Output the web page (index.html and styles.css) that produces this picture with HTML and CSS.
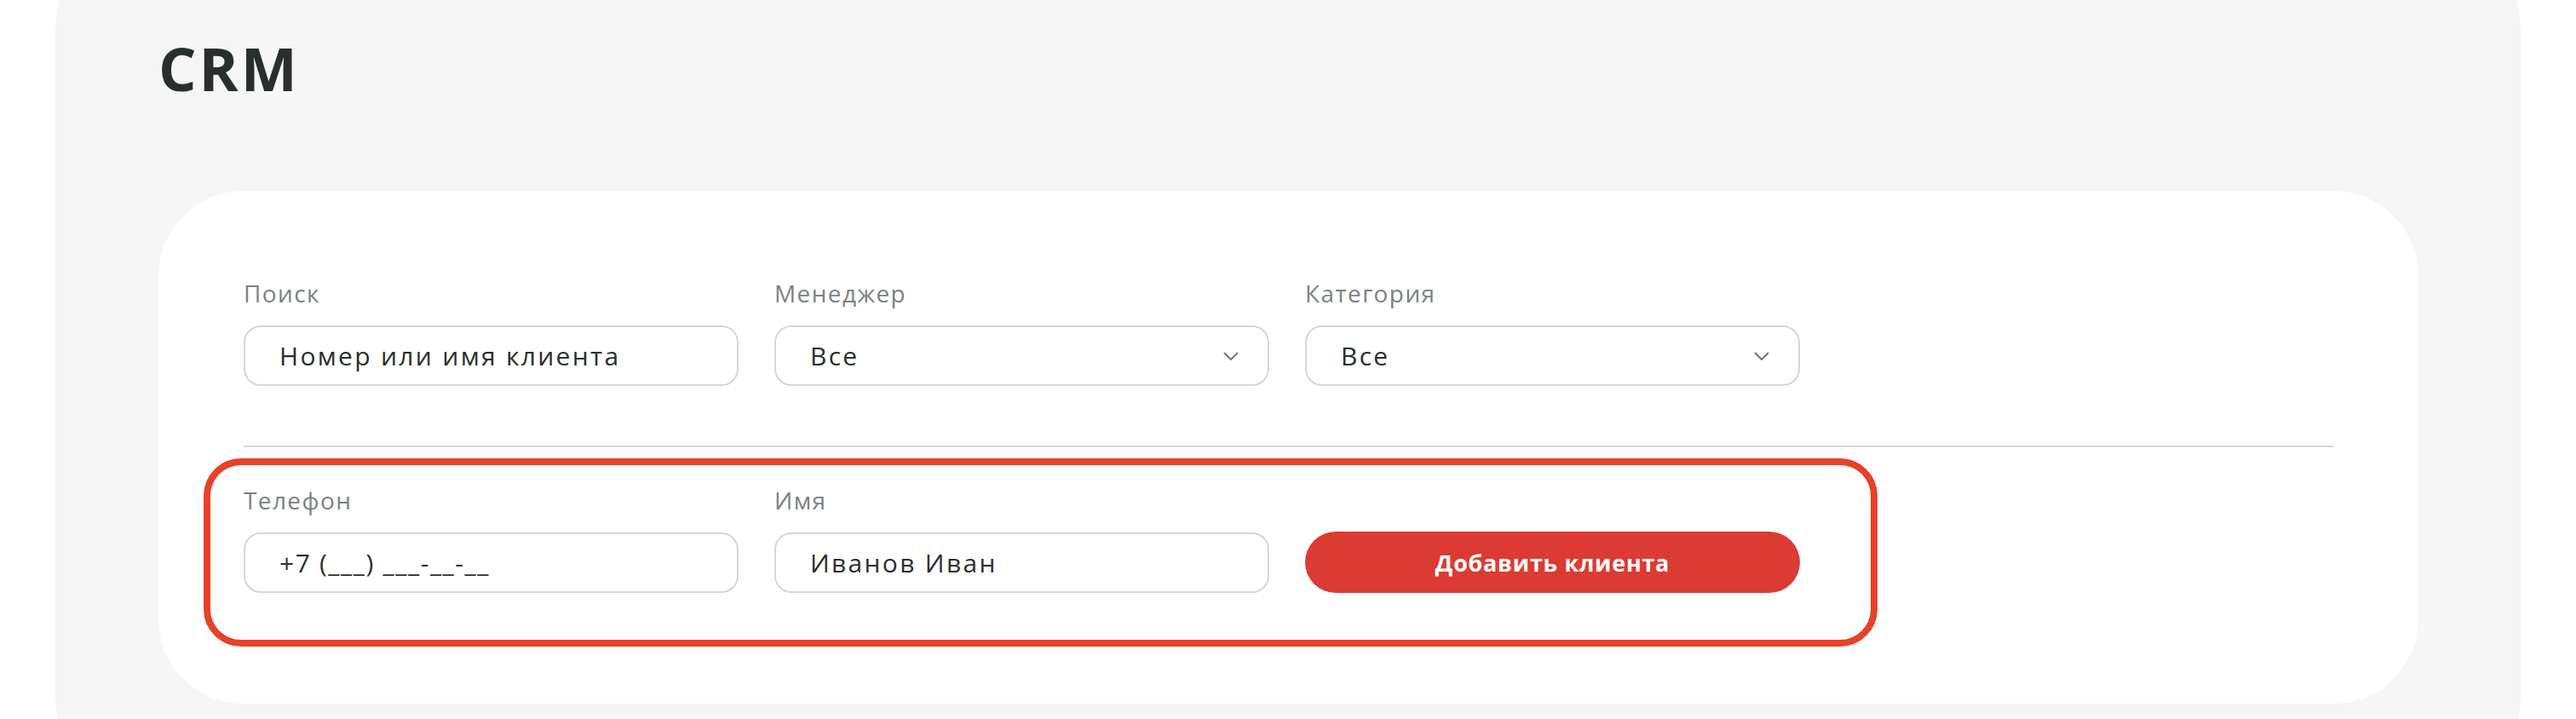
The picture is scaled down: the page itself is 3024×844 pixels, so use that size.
FILE: index.html
```html
<!DOCTYPE html>
<html lang="ru">
<head>
<meta charset="utf-8">
<title>CRM</title>
<link rel="stylesheet" href="styles.css">
</head>
<body>
<main class="panel">
  <h1 class="title">CRM</h1>
  <section class="card">
    <div class="row">
      <div class="group">
        <label class="label">Поиск</label>
        <div class="field"><span class="value">Номер или имя клиента</span></div>
      </div>
      <div class="group">
        <label class="label">Менеджер</label>
        <div class="field select"><span class="value">Все</span>
          <svg class="chevron" viewBox="0 0 18 10" width="18" height="10"><polyline points="1,1 9,9 17,1"/></svg>
        </div>
      </div>
      <div class="group">
        <label class="label">Категория</label>
        <div class="field select"><span class="value">Все</span>
          <svg class="chevron" viewBox="0 0 18 10" width="18" height="10"><polyline points="1,1 9,9 17,1"/></svg>
        </div>
      </div>
    </div>
    <div class="divider"></div>
    <div class="row row-add">
      <div class="group">
        <label class="label">Телефон</label>
        <div class="field"><span class="value value-phone">+7 (___) ___-__-__</span></div>
      </div>
      <div class="group">
        <label class="label">Имя</label>
        <div class="field"><span class="value">Иванов Иван</span></div>
      </div>
      <div class="group group-btn">
        <button class="btn" type="button">Добавить клиента</button>
      </div>
      <div class="highlight"></div>
    </div>
  </section>
</main>
</body>
</html>
```
FILE: styles.css
```css
html, body {
  margin: 0;
  padding: 0;
  background: #ffffff;
}
body {
  font-family: "Open Sans", "Noto Sans", "DejaVu Sans", sans-serif;
  overflow: hidden;
}
.panel {
  margin: -90px 0 0 65px;
  width: 2894px;
  box-sizing: border-box;
  padding: 128px 120px 120px 121px;
  background: #f6f6f6;
  border-radius: 125px;
}
.title {
  margin: 0 0 102px 0;
  font-size: 70px;
  line-height: 84px;
  font-weight: 700;
  color: #292e2e;
  letter-spacing: 3px;
}
.card {
  background: #ffffff;
  border-radius: 100px;
  padding: 103px 100px 100px 100px;
}
.row {
  display: grid;
  grid-template-columns: repeat(3, 581px);
  column-gap: 42px;
  align-items: end;
}
.group {
  display: flex;
  flex-direction: column;
  gap: 21px;
}
.label {
  font-size: 28px;
  line-height: 34px;
  color: #7a8381;
  letter-spacing: 1.4px;
}
.field {
  box-sizing: border-box;
  height: 71px;
  border: 2px solid #d3d8da;
  border-radius: 20px;
  background: #fff;
  display: flex;
  align-items: center;
  padding: 0 34px 0 40px;
}
.value {
  font-size: 30px;
  color: #2a2f2f;
  line-height: 40px;
  letter-spacing: 2.3px;
  flex: 1;
  white-space: nowrap;
}
.value-phone {
  letter-spacing: 1.6px;
}
.chevron {
  flex: none;
  fill: none;
  stroke: #6f7777;
  stroke-width: 2;
}
.divider {
  height: 2px;
  background: #d3d8da;
  margin-top: 70px;
}
.row-add {
  position: relative;
  margin-top: 45px;
  margin-bottom: 30px;
}
.btn {
  box-sizing: border-box;
  height: 72px;
  width: 100%;
  border: none;
  border-radius: 36px;
  background: #dc3b33;
  color: #ffffff;
  font-family: inherit;
  font-size: 27px;
  font-weight: 700;
  letter-spacing: 0.7px;
  cursor: pointer;
}
.highlight {
  position: absolute;
  left: -47px;
  top: -32px;
  width: 1965px;
  height: 221px;
  box-sizing: border-box;
  border: 8.5px solid #e8412a;
  border-radius: 44px;
  pointer-events: none;
}
```
